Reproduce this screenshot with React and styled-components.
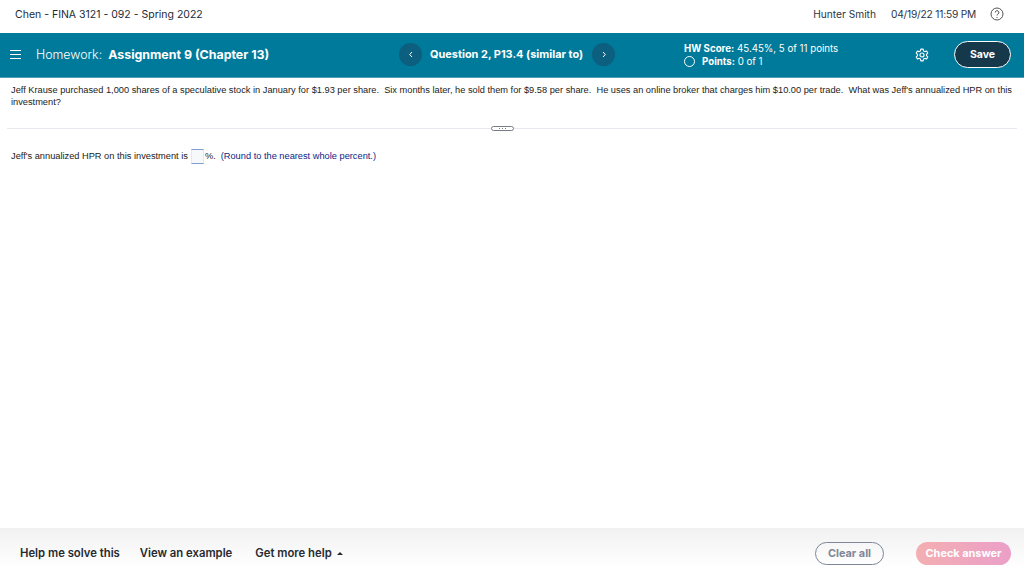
import React from "react";
import styled, { createGlobalStyle } from "styled-components";

const GlobalStyle = createGlobalStyle`
  html, body {
    margin: 0;
    padding: 0;
    background: #fff;
  }
  * {
    box-sizing: border-box;
  }
`;

const Page = styled.div`
  width: 1024px;
  height: 580px;
  display: flex;
  flex-direction: column;
  overflow: hidden;
  font-family: "Liberation Sans", Arial, sans-serif;
`;

const TopBar = styled.header`
  height: 33px;
  flex: none;
  display: flex;
  align-items: center;
  padding: 0 20px 5px 15px;
  font-family: Inter, sans-serif;
  font-size: 10.5px;
  color: #1d2b3a;
`;

const CourseName = styled.div`
  flex: 1;
`;

const TopItem = styled.div`
  margin-right: ${props => props.$gap}px;
  font-size: ${props => props.$size}px;
  letter-spacing: ${props => props.$spacing || 0}px;
  color: #2a3646;
`;

const NavBar = styled.nav`
  height: 45px;
  flex: none;
  display: grid;
  grid-template-columns: 399px 285px 231px 1fr;
  align-items: center;
  background: #007a9a;
  border-bottom: 1px solid #4a9db5;
  color: #fff;
  font-family: Inter, "Liberation Sans", sans-serif;
`;

const TitleArea = styled.div`
  display: flex;
  align-items: center;
  margin-bottom: 2px;
  padding-left: 10px;
  font-size: 12.4px;
`;

const Menu = styled.div`
  width: 11px;
  height: 9px;
  margin-right: 15px;
  border-top: 1px solid #fff;
  border-bottom: 1px solid #fff;
  display: flex;
  align-items: center;

  &::before {
    content: "";
    display: block;
    width: 100%;
    height: 1px;
    background: #fff;
  }
`;

const HomeworkLabel = styled.span`
  font-weight: 300;
  margin-right: 6px;
`;

const Strong = styled.span`
  font-weight: 700;
`;

const QuestionArea = styled.div`
  display: flex;
  align-items: center;
  margin-bottom: 2px;
  font-size: 10.95px;
  font-weight: 700;
`;

const RoundNav = styled.div`
  width: 23px;
  height: 23px;
  border-radius: 50%;
  background: #0c5f7f;
  display: flex;
  align-items: center;
  justify-content: center;
  margin: ${props => props.$margin};
`;

const ScoreArea = styled.div`
  font-size: 9.7px;
  line-height: 13px;
  font-weight: 400;
`;

const PointsRow = styled.div`
  display: flex;
  align-items: center;
`;

const Ring = styled.span`
  width: 11px;
  height: 11px;
  margin-right: 7px;
  border: 1px solid #fff;
  border-radius: 50%;
`;

const ActionArea = styled.div`
  display: flex;
  align-items: center;
  margin-bottom: 1px;
`;

const SaveButton = styled.button`
  width: 57px;
  height: 27px;
  margin-left: 25px;
  border: 1px solid #fff;
  border-radius: 14px;
  background: #16384b;
  color: #fff;
  font-family: Inter, sans-serif;
  font-size: 10.5px;
  font-weight: 700;
  padding: 0;
`;

const Main = styled.main`
  flex: 1;
  min-height: 0;
  font-size: 9.25px;
  color: #222;
`;

const QuestionText = styled.p`
  margin: 0;
  height: 50px;
  padding: 6px 11px 0;
  line-height: 12px;
`;

const Divider = styled.div`
  position: relative;
  height: 1px;
  margin: 0 7px;
  background: #e7e9f0;
`;

const Grip = styled.span`
  position: absolute;
  left: 484px;
  top: -2px;
  width: 23px;
  height: 5px;
  display: flex;
  align-items: center;
  justify-content: center;
  gap: 2px;
  border: 1px solid #777c86;
  border-radius: 3px;
  background: #fff;
`;

const GripDot = styled.span`
  width: 1px;
  height: 1px;
  background: #777c86;
`;

const AnswerLine = styled.div`
  display: flex;
  align-items: center;
  height: 18px;
  margin-top: 18px;
  padding-left: 11px;
`;

const AnswerBox = styled.span`
  width: 13px;
  height: 15px;
  margin: 0 1px 0 3px;
  background: #f7f8fa;
  border: 1px solid #e3e8f2;
  border-top-color: #7f9fd0;
  border-bottom-color: #7f9fd0;
`;

const Hint = styled.span`
  margin-left: 5px;
  color: #0a1f86;
`;

const Footer = styled.footer`
  height: 52px;
  flex: none;
  display: flex;
  align-items: center;
  padding: 0 13px 2px 20px;
  background: linear-gradient(#f1f1f2, #ffffff 75%);
  font-family: Inter, "Liberation Sans", sans-serif;
`;

const HelpLink = styled.span`
  margin-right: ${props => props.$gap}px;
  font-size: 11.3px;
  font-weight: 600;
  color: #262a30;
`;

const Spacer = styled.div`
  flex: 1;
`;

const PillButton = styled.button`
  height: 23px;
  border-radius: 12px;
  padding: 0;
  font-family: Inter, sans-serif;
  font-size: 10.9px;
  font-weight: 700;
`;

const ClearButton = styled(PillButton)`
  width: 69px;
  margin-right: 32px;
  border: 1px solid #7e8798;
  background: transparent;
  color: #7e8798;
`;

const CheckButton = styled(PillButton)`
  width: 95px;
  border: 0;
  background: linear-gradient(90deg, #f3afb2, #eb9fc8);
  color: #fff;
`;

const HelpIcon = () => (
  <svg width="14" height="14" viewBox="0 0 14 14" fill="none" stroke="#555">
    <circle cx="7" cy="7" r="6" />
    <path d="M5.3 5.5a1.8 1.8 0 1 1 2.7 1.5c-.7.4-1 .8-1 1.5" />
    <path d="M7 10v1" />
  </svg>
);

const Chevron = ({ left }) => (
  <svg width="6" height="7" viewBox="0 0 6 7" fill="none" stroke="#fff" strokeWidth="1">
    <path d={left ? "M4 1 1.7 3.5 4 6" : "M2 1l2.3 2.5L2 6"} />
  </svg>
);

const GearIcon = () => (
  <svg width="14" height="14" viewBox="0 0 24 24" fill="none" stroke="#fff" strokeWidth="1.9" strokeLinejoin="round">
    <path d="M10 2h4l.7 3 2.2 1.2 3-.9 2 3.4-2.2 2.1v2.4l2.2 2.1-2 3.4-3-.9-2.2 1.2-.7 3h-4l-.7-3-2.2-1.2-3 .9-2-3.4 2.2-2.1v-2.4L2.1 8.700l2-3.400 3 .9L9.300 5z" />
    <circle cx="12" cy="12" r="3.500" />
  </svg>
);

const Caret = styled.span`
  display: inline-block;
  margin-left: 5px;
  vertical-align: 2px;
  border-left: 3px solid transparent;
  border-right: 3px solid transparent;
  border-bottom: 3px solid #262a30;
`;

export default function App() {
  return (
    <Page>
      <GlobalStyle />
      <TopBar>
        <CourseName>Chen - FINA 3121 - 092 - Spring 2022</CourseName>
        <TopItem $gap={15} $size={10.2}>Hunter Smith</TopItem>
        <TopItem $gap={14} $size={10.2} $spacing={-0.2}>04/19/22 11:59 PM</TopItem>
        <HelpIcon />
      </TopBar>
      <NavBar>
        <TitleArea>
          <Menu />
          <HomeworkLabel>Homework:</HomeworkLabel>
          <Strong>Assignment 9 (Chapter 13)</Strong>
        </TitleArea>
        <QuestionArea>
          <RoundNav $margin="0 8px 0 0"><Chevron left /></RoundNav>
          Question 2, P13.4 (similar to)
          <RoundNav $margin="0 0 0 9px"><Chevron /></RoundNav>
        </QuestionArea>
        <ScoreArea>
          <div><Strong>HW Score:</Strong> 45.45%, 5 of 11 points</div>
          <PointsRow><Ring /><Strong>Points:</Strong>&nbsp;0 of 1</PointsRow>
        </ScoreArea>
        <ActionArea>
          <GearIcon />
          <SaveButton>Save</SaveButton>
        </ActionArea>
      </NavBar>
      <Main>
        <QuestionText>
          Jeff Krause purchased 1,000 shares of a speculative stock in January for $1.93 per share.&nbsp; Six months later, he sold them for $9.58 per share.&nbsp; He uses an online broker that charges him $10.00 per trade.&nbsp; What was Jeff's annualized HPR on this investment?
        </QuestionText>
        <Divider>
          <Grip>
            <GripDot />
            <GripDot />
            <GripDot />
          </Grip>
        </Divider>
        <AnswerLine>
          Jeff's annualized HPR on this investment is
          <AnswerBox />
          %.
          <Hint>(Round to the nearest whole percent.)</Hint>
        </AnswerLine>
      </Main>
      <Footer>
        <HelpLink $gap={20}>Help me solve this</HelpLink>
        <HelpLink $gap={23}>View an example</HelpLink>
        <HelpLink $gap={0}>Get more help<Caret /></HelpLink>
        <Spacer />
        <ClearButton>Clear all</ClearButton>
        <CheckButton>Check answer</CheckButton>
      </Footer>
    </Page>
  );
}
